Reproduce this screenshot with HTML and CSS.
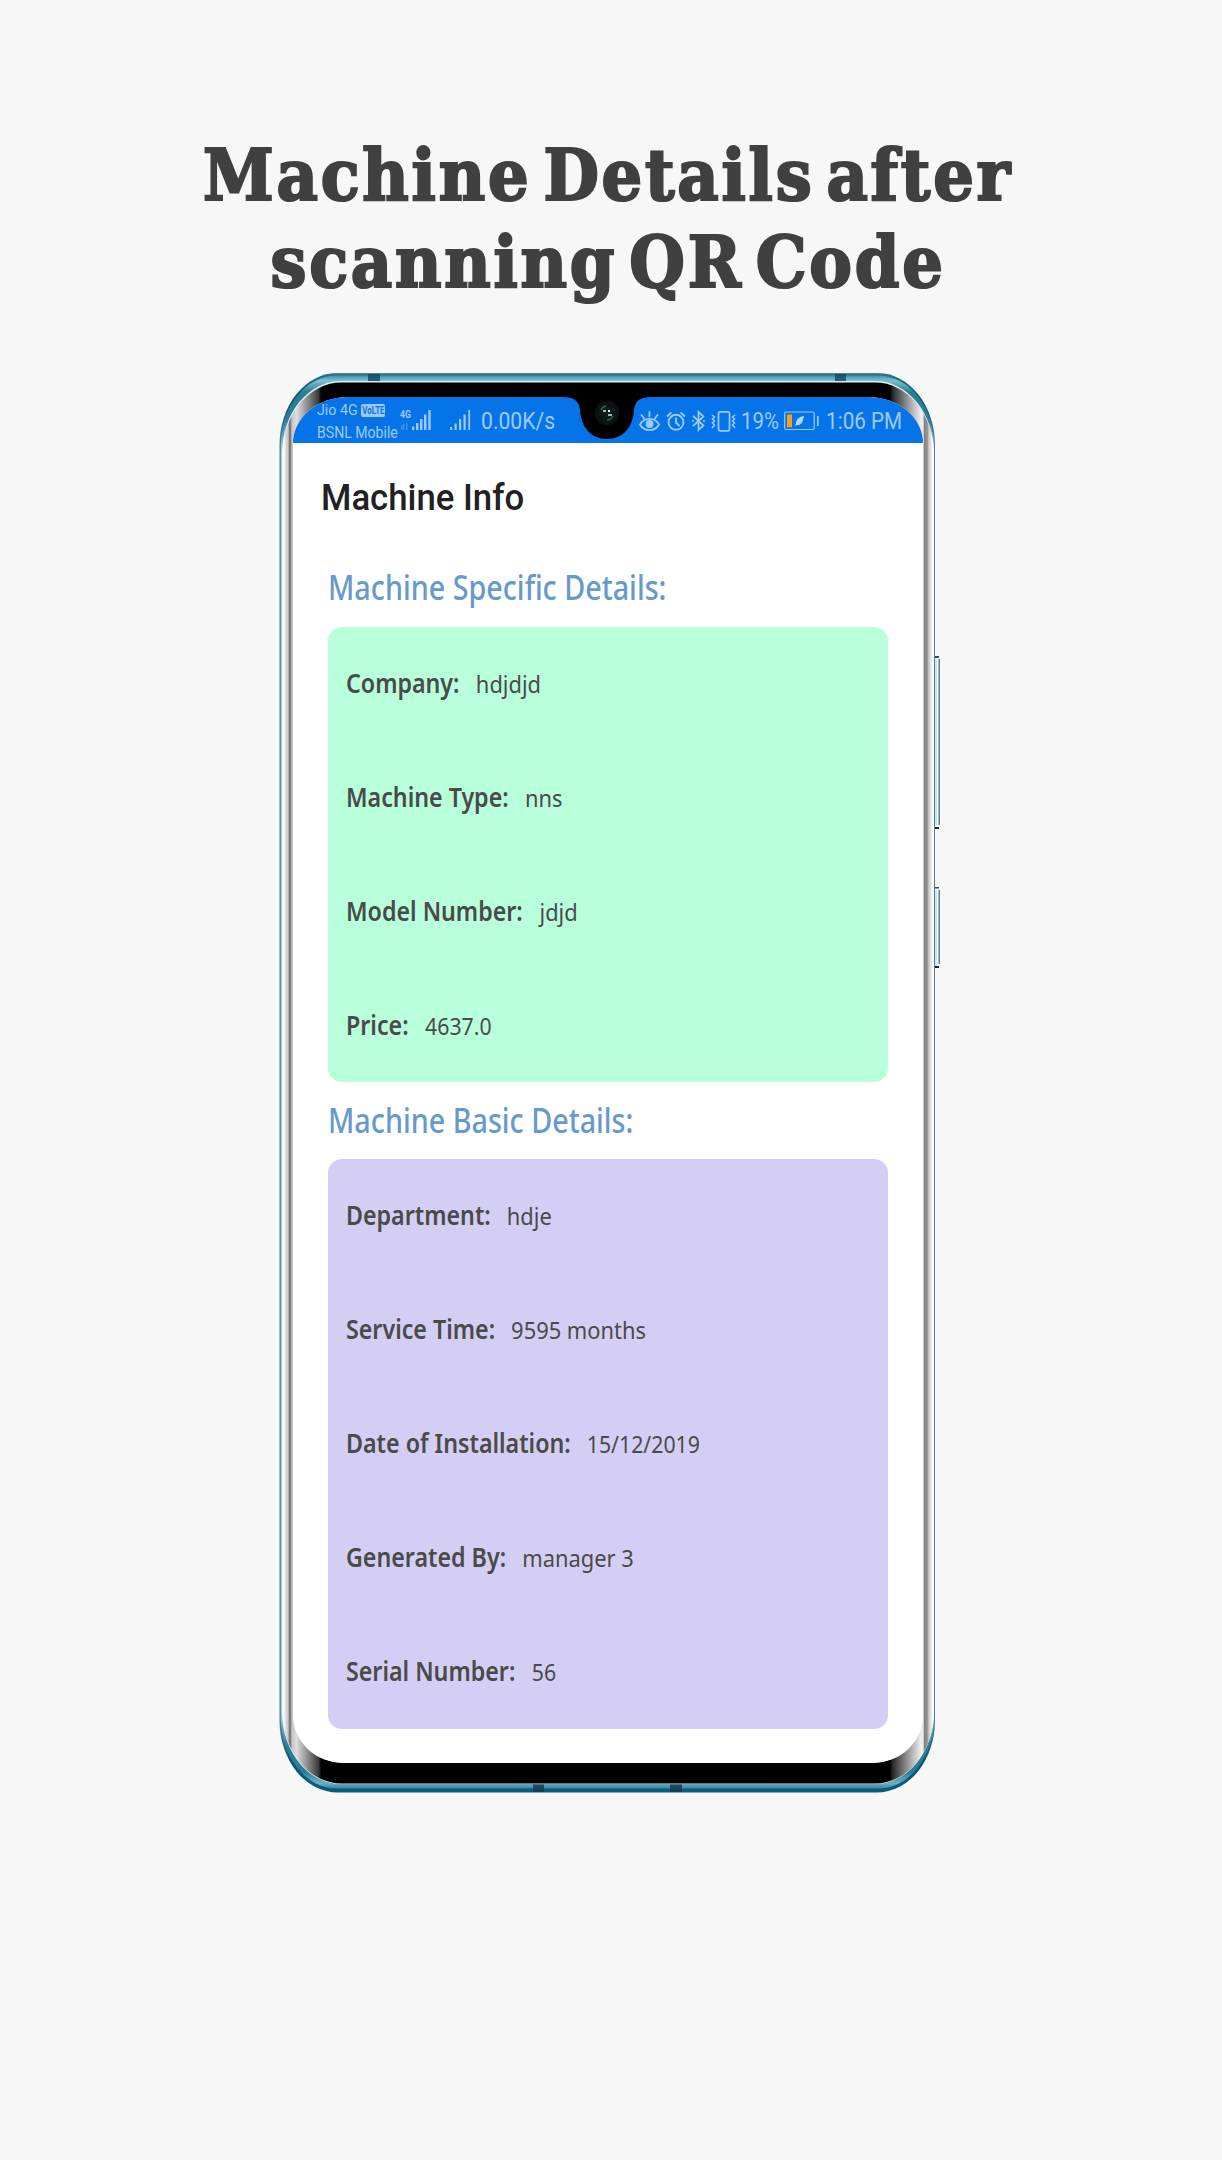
FILE: index.html
```
<!DOCTYPE html>
<html lang="en">
<head>
<meta charset="utf-8">
<title>Machine Details after scanning QR Code</title>
<link rel="stylesheet" href="styles.css">
</head>
<body>
<main class="poster">
  <h1 class="headline">Machine Details after<br>scanning QR Code</h1>

  <div class="phone">
    <svg class="frame" viewBox="0 0 664 1422" aria-hidden="true">
      <defs>
        <linearGradient id="rim" x1="0" y1="1" x2="0" y2="1420" gradientUnits="userSpaceOnUse">
          <stop offset="0" stop-color="#5c8c98"/><stop offset=".0014" stop-color="#1d6f8a"/>
          <stop offset=".02" stop-color="#0a5472"/><stop offset=".05" stop-color="#4c8198"/>
          <stop offset=".95" stop-color="#4c8198"/><stop offset=".98" stop-color="#0a5472"/>
          <stop offset="1" stop-color="#0a5d7d"/>
        </linearGradient>
        <linearGradient id="shine" x1="0" y1="3" x2="0" y2="1417" gradientUnits="userSpaceOnUse">
          <stop offset="0" stop-color="#3b8ba1"/><stop offset=".004" stop-color="#7cc0d0"/>
          <stop offset=".012" stop-color="#2d7c95"/><stop offset=".03" stop-color="#2d7c95"/>
          <stop offset=".055" stop-color="#a9cdd9"/><stop offset=".945" stop-color="#a9cdd9"/>
          <stop offset=".97" stop-color="#2d7c95"/><stop offset=".988" stop-color="#2d7c95"/>
          <stop offset=".996" stop-color="#6db1c2"/><stop offset="1" stop-color="#2d8099"/>
        </linearGradient>
        <linearGradient id="bezel" x1="4" y1="0" x2="656" y2="0" gradientUnits="userSpaceOnUse">
          <stop offset="0" stop-color="#fff"/><stop offset=".004" stop-color="#f4f4f4"/>
          <stop offset=".006" stop-color="#d8d8d8"/><stop offset=".0095" stop-color="#c9c9c9"/>
          <stop offset=".011" stop-color="#777"/><stop offset=".0135" stop-color="#808080"/>
          <stop offset=".015" stop-color="#c4c4c4"/><stop offset=".022" stop-color="#dedede"/>
          <stop offset=".038" stop-color="#929292"/><stop offset=".056" stop-color="#3a3a3a"/>
          <stop offset=".0605" stop-color="#000"/><stop offset=".932" stop-color="#000"/>
          <stop offset=".937" stop-color="#2b2b2b"/><stop offset=".962" stop-color="#a0a0a0"/>
          <stop offset=".98" stop-color="#eee"/><stop offset=".9835" stop-color="#e8e8e8"/>
          <stop offset=".985" stop-color="#808080"/><stop offset=".99" stop-color="#989898"/>
          <stop offset=".992" stop-color="#c8c8c8"/><stop offset=".9955" stop-color="#e6e6e6"/>
          <stop offset=".998" stop-color="#fff"/>
        </linearGradient>
      </defs>
      <g class="keys">
        <path fill="#c3e9f5" d="M657 287h3v166h-3zM657 518h3v76h-3z"/>
        <path fill="#fff" d="M659 287h1.500v166h-1.500zM659 518h1.500v76h-1.500z"/>
        <path fill="#5c7f8f" d="M660.500 287h1.500v166h-1.500zM660.500 518h1.500v74h-1.500z"/>
        <path fill="#3a4b55" d="M656 284h5v2h-5zM656 515h5v1.500h-5z"/>
        <path fill="#16262e" d="M656 455h5v2h-5zM656 594h5v2h-5z"/>
      </g>
      <rect x="1.500" y="1" width="655.500" height="1419.500" rx="58" ry="72" fill="url(#rim)"/>
      <rect x="2.800" y="3.500" width="653.200" height="1413" rx="56" ry="70" fill="url(#shine)"/>
      <rect x="4" y="9" width="652" height="1403" rx="59" ry="72" fill="#e3eef1"/>
      <rect x="4.500" y="10.500" width="651.500" height="1401" rx="59" ry="72" fill="url(#bezel)"/>
      <path fill="#12485f" opacity=".8" d="M90 2h12v7H90zM557 2h11v7h-11z"/>
      <path fill="#0f3d52" opacity=".85" d="M255 1412.500h11v7.500h-11zM392 1412.500h12v7.500h-12z"/>
    </svg>

    <section class="screen">
      <header class="status">
        <div class="carriers">
          <div class="carrier"><span class="sim sim-a">Jio 4G</span><span class="volte"><b>VoLTE</b></span></div>
          <div class="carrier"><span class="sim sim-b">BSNL Mobile</span></div>
        </div>
        <svg class="bars-main" viewBox="0 0 33 23">
          <text x="0" y="9" textLength="11" lengthAdjust="spacingAndGlyphs" class="net">4G</text>
          <path fill="currentColor" d="M12 17.500h2.300V21H12zM16 14h2.400v7H16zM20 10h2.400v11H20zM24 5.500h2.400V21H24zM28.300 1h2.400v20h-2.400z"/>
          <path fill="currentColor" opacity=".35" d="M1 16.500h1.500V21H1zM3 15h1.500v6H3zM6 14h1.500v7H6z"/>
        </svg>
        <svg class="bars-alt" viewBox="0 0 22 23">
          <path fill="currentColor" d="M0 18h2.200v3H0zM4.500 14.500h2.200V21H4.500zM9 10h2.200v11H9zM13.500 5.500h2.200V21h-2.200zM18.300 1h1.800v20h-1.800z"/>
        </svg>
        <span class="speed">0.00K/s</span>
        <div class="indicators">
          <svg width="21" height="22" viewBox="0 0 21 22" fill="none" stroke="currentColor" stroke-width="1.800" stroke-linecap="round">
            <path d="M1 14.500C5 7 16 7 20 14.500 16 22 5 22 1 14.500z"/><circle cx="10.500" cy="14" r="4" fill="currentColor" stroke="none"/>
            <path d="M10.500 2v4.500M2.500 5l2.500 3.200M18.500 5 16 8.200"/>
          </svg>
          <svg class="alarm" width="20" height="22" viewBox="0 0 20 22" fill="none" stroke="currentColor" stroke-width="1.900">
            <circle cx="10" cy="12.300" r="7.500"/><path d="M10 7.500v5l3.500 3.500M1 6.500 5.300 2.500M19 6.500 14.700 2.500"/>
          </svg>
          <svg class="bt" width="13" height="22" viewBox="0 0 13 22" fill="none" stroke="currentColor" stroke-width="1.700">
            <path d="M1 6l10.500 9.500-5 4.500V2l5 4.500L1 16"/><path d="M0 11h2M11 11h2"/>
          </svg>
          <svg class="vib" width="25" height="22" viewBox="0 0 25 22" fill="none" stroke="currentColor" stroke-width="1.700">
            <rect x="7.500" y="1.800" width="11" height="19" rx="1.500"/>
            <path stroke-width="1.600" d="M1 5l2.500 2L1.500 9l2 2-2 2 2 2L1 18M24 5l-2.500 2 2 2-2 2 2 2-2 2 2.500 3"/>
          </svg>
          <span class="pct">19%</span>
          <svg class="battery" width="36" height="20" viewBox="0 0 36 20">
            <rect x=".7" y="1" width="29.500" height="17.500" rx="1.500" fill="none" stroke="currentColor" stroke-width="1.200"/>
            <path fill="currentColor" d="M33 5h1.700v10H33z"/>
            <path fill="#ff9c1a" d="M3 3.500h5v12.800H3z"/>
            <path fill="#b5d8fb" d="M20 5c-4 .8-8 3-8 7.200L11.300 15l2.200-.9C18 14 19 10 20 5z"/>
          </svg>
          <span class="clock">1:06 PM</span>
        </div>
        <svg class="notch" viewBox="0 0 88 43" aria-hidden="true">
          <defs><radialGradient id="lens"><stop offset="0" stop-color="#12201f"/><stop offset=".6" stop-color="#0c1414"/><stop offset=".9" stop-color="#0b0f0f"/><stop offset="1" stop-color="#000"/></radialGradient></defs>
          <path d="M0 0C10 0 16 3 17 13 18 30 28 42 44 42S70 30 71 13C72 3 78 0 88 0z"/>
          <circle cx="44" cy="16" r="13" fill="url(#lens)"/>
          <path fill="none" stroke="#35635f" stroke-width="1.300" d="M38 13a7 7 0 0 1 5-4M50 19a7 7 0 0 1-6 4"/>
          <path fill="#8fbfb9" d="M40 13h3v2h-3zM45 17h4v2h-4z"/><path fill="#fff" d="M45 13h2v2h-2z"/>
        </svg>
      </header>

      <h2 class="title">Machine Info</h2>

      <h3 class="section">Machine Specific Details:</h3>
      <dl class="card green">
        <div class="row"><dt>Company:</dt><dd class="word">hdjdjd</dd></div>
        <div class="row"><dt>Machine Type:</dt><dd class="word">nns</dd></div>
        <div class="row"><dt>Model Number:</dt><dd class="word">jdjd</dd></div>
        <div class="row"><dt>Price:</dt><dd>4637.0</dd></div>
      </dl>

      <h3 class="section">Machine Basic Details:</h3>
      <dl class="card violet">
        <div class="row"><dt>Department:</dt><dd class="word">hdje</dd></div>
        <div class="row"><dt>Service Time:</dt><dd class="word">9595 months</dd></div>
        <div class="row"><dt>Date of Installation:</dt><dd>15/12/2019</dd></div>
        <div class="row"><dt>Generated By:</dt><dd class="word">manager 3</dd></div>
        <div class="row"><dt>Serial Number:</dt><dd>56</dd></div>
      </dl>
    </section>
  </div>
</main>
</body>
</html>
```
FILE: styles.css
```
* { box-sizing: border-box; margin: 0; padding: 0; }

body { background: #f7f7f7; }

.poster { width: 1222px; height: 2160px; overflow: hidden; }

.headline {
  height: 372px;
  padding: 132px 0 0 0;
  margin-left: -6px;
  text-align: center;
  font: 700 71px/87px "DejaVu Serif Condensed", "DejaVu Serif", serif;
  font-stretch: condensed;
  letter-spacing: 2.800px;
  word-spacing: -13px;
  color: #404040;
  -webkit-text-stroke: 2.200px #404040;
}

.phone {
  position: relative;
  width: 664px;
  height: 1422px;
  margin-left: 278px;
  padding: 25px 0 0 15px;
}

.frame { position: absolute; inset: 0; width: 664px; height: 1422px; }

.screen {
  position: relative;
  width: 629.500px;
  height: 1366px;
  background: #fff;
  border-radius: 55px 55px 50px 50px / 46px 46px 48px 48px;
  overflow: hidden;
}

.status {
  position: relative;
  display: flex;
  align-items: center;
  height: 46px;
  padding: 1px 21px 0 24px;
  background: #0674e8;
  color: #9ccbfb;
  font-family: Roboto, sans-serif;
  white-space: nowrap;
}

.carriers { width: 83px; padding-top: 1px; }
.carrier { display: flex; align-items: center; height: 22px; }
.sim { transform-origin: left; }
.sim-a { width: 44px; font-size: 15.500px; transform: scaleX(.92); }
.sim-b { font-size: 16px; transform: scaleX(.88); }

.volte {
  display: flex;
  justify-content: center;
  width: 24px;
  height: 13px;
  border-radius: 2px;
  background: #9ccbfb;
  color: #0674e8;
  font-size: 11px;
  line-height: 13px;
}
.volte b { transform: scaleX(.72); }

.bars-main { width: 33px; height: 23px; }
.bars-alt { width: 22px; height: 23px; margin-left: 17px; }
.net { font: 700 11px Roboto, sans-serif; fill: currentColor; }

.speed, .pct, .clock { height: 46px; font-size: 23px; line-height: 47px; transform-origin: left; }
.speed { width: 74px; margin-left: 9px; transform: scaleX(.92); }

.indicators { display: flex; align-items: center; margin-left: auto; }
.alarm, .bt, .vib { margin-left: 6px; }
.pct { width: 38px; margin-left: 5px; transform: scaleX(.89); }
.battery { margin-left: 5px; }
.clock { width: 76px; margin-left: 6px; transform: scaleX(.9); }

.notch { position: absolute; left: 270px; top: 0; width: 88px; height: 43px; }

.title {
  height: 112px;
  padding-left: 28px;
  font: 500 36px/110px Roboto, sans-serif;
  color: #212121;
  transform: scaleX(.965);
  transform-origin: 28px 0;
}

.section {
  height: 77px;
  padding-left: 35px;
  font: 500 34px/77px "Noto Sans", sans-serif;
  color: #6699cc;
  transform: scaleX(.845);
  transform-origin: 35px 0;
  white-space: nowrap;
}

.title + .section { height: 72px; line-height: 65px; }

.card {
  width: 560px;
  margin-left: 35px;
  padding-left: 17.500px;
  border-radius: 14px;
}
.green { height: 455px; background: #b8ffdb; }
.violet { height: 570px; background: #d4cef4; }

.row {
  display: flex;
  align-items: baseline;
  gap: 19px;
  height: 113.900px;
  line-height: 111px;
  font-family: "Noto Sans", sans-serif;
  color: #4a4a4a;
  white-space: nowrap;
  transform: scaleX(.86);
  transform-origin: left;
}

.violet .row { line-height: 112px; }

dt { font-size: 27px; font-weight: 600; }
dd { font-size: 24px; font-weight: 400; transform: scaleX(1.03); transform-origin: left; }
.word { transform: scaleX(1.06); }
```
